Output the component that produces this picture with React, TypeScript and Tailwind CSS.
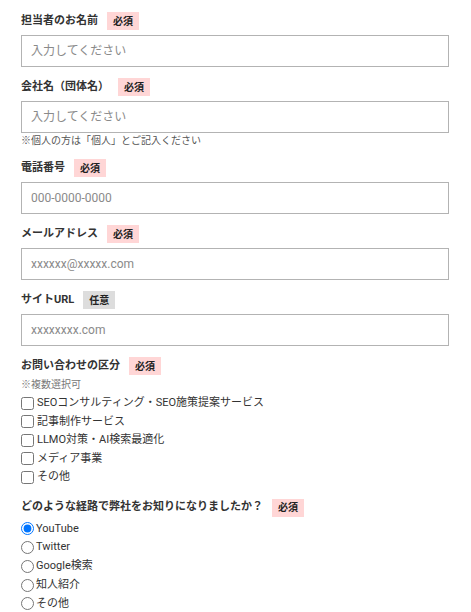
import React from "react";

const font = { fontFamily: 'Roboto, "Noto Sans CJK JP", sans-serif' };

function Badge({ optional }: { optional?: boolean }) {
  return (
    <span
      className={
        "ml-[9px] inline-flex h-[18px] items-center px-[6px] text-[10px] font-bold text-[#222] " +
        (optional ? "bg-[#dddddd]" : "bg-[#ffd6d6]")
      }
    >
      {optional ? "任意" : "必須"}
    </span>
  );
}

function Label({ text, optional }: { text: string; optional?: boolean }) {
  return (
    <div className="flex h-[18px] items-center">
      <span className="text-[11px] font-bold text-[#333]">{text}</span>
      <Badge optional={optional} />
    </div>
  );
}

function Field({
  label,
  placeholder,
  optional,
  note,
}: {
  label: string;
  placeholder: string;
  optional?: boolean;
  note?: string;
}) {
  return (
    <div className="mb-[11px]">
      <Label text={label} optional={optional} />
      <input
        className="mt-[5px] block h-[32px] w-full border border-[#b3b3b3] bg-white px-[9px] text-[12px] text-[#333] outline-none placeholder:text-[#8a8a8a]"
        placeholder={placeholder}
      />
      {note && <div className="mt-[1px] h-[14px] text-[10px] leading-[14px] text-[#555]">{note}</div>}
    </div>
  );
}

export default function App() {
  const cats = [
    "SEOコンサルティング・SEO施策提案サービス",
    "記事制作サービス",
    "LLMO対策・AI検索最適化",
    "メディア事業",
    "その他",
  ];
  const routes = ["YouTube", "Twitter", "Google検索", "知人紹介", "その他"];
  return (
    <div className="min-h-[612px] bg-white pl-[21px] pr-[22px] pt-[12px]" style={font}>
      <Field label="担当者のお名前" placeholder="入力してください" />
      <Field
        label="会社名（団体名）"
        placeholder="入力してください"
        note="※個人の方は「個人」とご記入ください"
      />
      <Field label="電話番号" placeholder="000-0000-0000" />
      <Field label="メールアドレス" placeholder="xxxxxx@xxxxx.com" />
      <Field label="サイトURL" placeholder="xxxxxxxx.com" optional />

      <div className="mb-[12px]">
        <Label text="お問い合わせの区分" />
        <div className="mt-[3px] text-[10px] leading-[14px] text-[#777]">※複数選択可</div>
        <div className="mt-[2px] flex flex-col">
          {cats.map((c) => (
            <label key={c} className="flex h-[18.5px] items-center text-[11px] text-[#333]">
              <input type="checkbox" className="m-0 mr-[3px] h-[13px] w-[13px]" />
              {c}
            </label>
          ))}
        </div>
      </div>

      <div>
        <Label text="どのような経路で弊社をお知りになりましたか？" />
        <div className="mt-[3px] flex flex-col">
          {routes.map((r, i) => (
            <label key={r} className="flex h-[18.75px] items-center text-[11px] text-[#333]">
              <input
                type="radio"
                name="route"
                defaultChecked={i === 0}
                className="m-0 mr-[2px] h-[13px] w-[13px]"
              />
              {r}
            </label>
          ))}
        </div>
      </div>
    </div>
  );
}
